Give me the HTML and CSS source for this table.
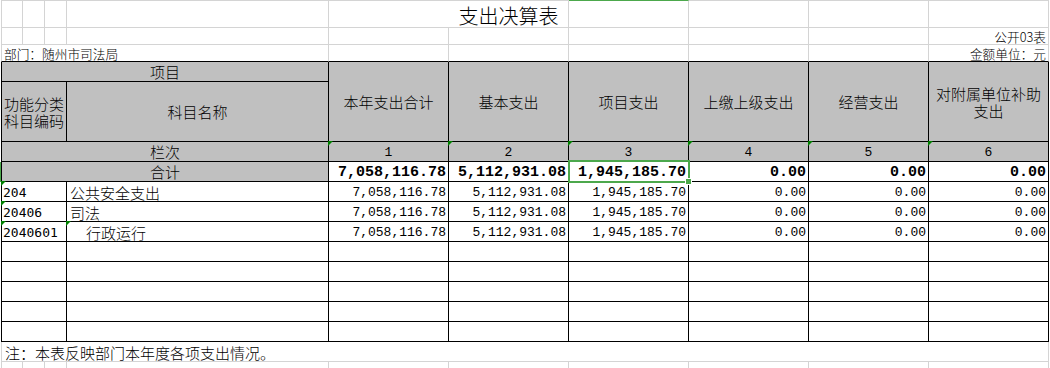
FILE: index.html
```html
<!DOCTYPE html>
<html lang="zh-CN">
<head>
<meta charset="utf-8">
<title>支出决算表</title>
<link rel="stylesheet" href="styles.css">
</head>
<body>
<div class="sheet">
  <!-- row 1: title -->
  <div class="cell top first"></div>
  <div class="cell top"></div>
  <div class="cell top"></div>
  <div class="cell top"></div>
  <div class="cell top s2 title"><span>支出决算表</span></div>
  <div class="cell top colsel"></div>
  <div class="cell top"></div>
  <div class="cell top"></div>
  <div class="cell top"></div>

  <!-- row 2 -->
  <div class="cell first"></div>
  <div class="cell"></div>
  <div class="cell"></div>
  <div class="cell"></div>
  <div class="cell"></div>
  <div class="cell"></div>
  <div class="cell"></div>
  <div class="cell"></div>
  <div class="cell"></div>
  <div class="cell small right">公开03表</div>

  <!-- row 3 -->
  <div class="cell first edge s4 small left">部门：随州市司法局</div>
  <div class="cell edge"></div>
  <div class="cell edge"></div>
  <div class="cell edge"></div>
  <div class="cell edge"></div>
  <div class="cell edge"></div>
  <div class="cell edge small right">金额单位：元</div>

  <!-- header rows -->
  <div class="cell first tb hd s4">项目</div>
  <div class="cell tb hd r2">本年支出合计</div>
  <div class="cell tb hd r2">基本支出</div>
  <div class="cell tb hd r2">项目支出</div>
  <div class="cell tb hd r2">上缴上级支出</div>
  <div class="cell tb hd r2">经营支出</div>
  <div class="cell tb hd r2 wrap"><span>对附属单位补助支出</span></div>
  <div class="cell first tb hd s3 wrap"><span>功能分类科目编码</span></div>
  <div class="cell tb hd">科目名称</div>

  <!-- 栏次 -->
  <div class="cell first tb hd s4">栏次</div>
  <div class="cell tb hd num mark">1</div>
  <div class="cell tb hd num mark">2</div>
  <div class="cell tb hd num mark">3</div>
  <div class="cell tb hd num mark">4</div>
  <div class="cell tb hd num mark">5</div>
  <div class="cell tb hd num mark">6</div>

  <!-- 合计 -->
  <div class="cell first tb hd s4 rowsel">合计</div>
  <div class="cell tb amt bold">7,058,116.78</div>
  <div class="cell tb amt bold">5,112,931.08</div>
  <div class="cell tb amt bold sel">1,945,185.70</div>
  <div class="cell tb amt bold">0.00</div>
  <div class="cell tb amt bold">0.00</div>
  <div class="cell tb amt bold">0.00</div>

  <!-- data rows -->
  <div class="cell first tb s3 code mark">204</div>
  <div class="cell tb name">公共安全支出</div>
  <div class="cell tb amt">7,058,116.78</div>
  <div class="cell tb amt">5,112,931.08</div>
  <div class="cell tb amt">1,945,185.70</div>
  <div class="cell tb amt">0.00</div>
  <div class="cell tb amt">0.00</div>
  <div class="cell tb amt">0.00</div>

  <div class="cell first tb s3 code mark">20406</div>
  <div class="cell tb name">司法</div>
  <div class="cell tb amt">7,058,116.78</div>
  <div class="cell tb amt">5,112,931.08</div>
  <div class="cell tb amt">1,945,185.70</div>
  <div class="cell tb amt">0.00</div>
  <div class="cell tb amt">0.00</div>
  <div class="cell tb amt">0.00</div>

  <div class="cell first tb s3 code mark">2040601</div>
  <div class="cell tb name indent mark">行政运行</div>
  <div class="cell tb amt">7,058,116.78</div>
  <div class="cell tb amt">5,112,931.08</div>
  <div class="cell tb amt">1,945,185.70</div>
  <div class="cell tb amt">0.00</div>
  <div class="cell tb amt">0.00</div>
  <div class="cell tb amt">0.00</div>

  <!-- empty rows -->
  <div class="cell first tb s3"></div><div class="cell tb"></div>
  <div class="cell tb"></div><div class="cell tb"></div><div class="cell tb"></div><div class="cell tb"></div><div class="cell tb"></div><div class="cell tb"></div>
  <div class="cell first tb s3"></div><div class="cell tb"></div>
  <div class="cell tb"></div><div class="cell tb"></div><div class="cell tb"></div><div class="cell tb"></div><div class="cell tb"></div><div class="cell tb"></div>
  <div class="cell first tb s3"></div><div class="cell tb"></div>
  <div class="cell tb"></div><div class="cell tb"></div><div class="cell tb"></div><div class="cell tb"></div><div class="cell tb"></div><div class="cell tb"></div>
  <div class="cell first tb s3"></div><div class="cell tb"></div>
  <div class="cell tb"></div><div class="cell tb"></div><div class="cell tb"></div><div class="cell tb"></div><div class="cell tb"></div><div class="cell tb"></div>
  <div class="cell first tb s3"></div><div class="cell tb"></div>
  <div class="cell tb"></div><div class="cell tb"></div><div class="cell tb"></div><div class="cell tb"></div><div class="cell tb"></div><div class="cell tb"></div>

  <!-- note -->
  <div class="cell first s10 note">注：本表反映部门本年度各项支出情况。</div>

  <!-- trailing row -->
  <div class="cell first"></div>
  <div class="cell"></div>
  <div class="cell"></div>
  <div class="cell"></div>
  <div class="cell"></div>
  <div class="cell"></div>
  <div class="cell"></div>
  <div class="cell"></div>
  <div class="cell"></div>
  <div class="cell"></div>
</div>
</body>
</html>
```

FILE: styles.css
```css
html, body {
  margin: 0;
  padding: 0;
  overflow: hidden;
  background: #fff;
}

body {
  font-family: "Noto Sans CJK SC", "Noto Sans", sans-serif;
  font-weight: 300;
  color: #000;
}

.sheet {
  margin-left: 1px;
  display: grid;
  grid-template-columns: 22px 22px 22px 262px repeat(6, 120px);
  grid-template-rows: 28px 17px 17px 20px 60px 20px 20px repeat(8, 20px) 20px 20px;
  font-size: 15px;
  line-height: 15px;
}

.cell {
  box-sizing: border-box;
  position: relative;
  display: flex;
  align-items: center;
  min-width: 0;
  white-space: nowrap;
  border-right: 1px solid #d4d4d4;
  border-bottom: 1px solid #d4d4d4;
}

.top { border-top: 1px solid #d4d4d4; }
.first { border-left: 1px solid #d4d4d4; }
.edge { border-bottom-color: #000; }
.tb { border-color: #000; }

.s2 { grid-column: span 2; }
.s3 { grid-column: span 3; }
.s4 { grid-column: span 4; }
.s10 { grid-column: span 10; }
.r2 { grid-row: span 2; }

.hd {
  background: #c0c0c0;
  justify-content: center;
  text-align: center;
}

.wrap { white-space: normal; }
.wrap span { display: block; line-height: 17px; }

.title {
  justify-content: center;
  padding-left: 120px;
  padding-top: 3px;
  font-size: 20px;
  line-height: 20px;
}

.small {
  font-size: 12.7px;
  line-height: 13px;
  align-items: flex-end;
  padding-bottom: 1px;
}
.left { padding-left: 2px; }
.right { justify-content: flex-end; padding-right: 2px; }

.num {
  font-family: "Liberation Mono", "DejaVu Sans Mono", monospace;
  font-weight: normal;
  font-size: 13px;
  padding-top: 2px;
}

.amt {
  justify-content: flex-end;
  padding-right: 2px;
  padding-top: 1px;
  font-family: "Liberation Mono", "DejaVu Sans Mono", monospace;
  font-weight: normal;
  font-size: 13px;
}
.bold {
  font-weight: bold;
  font-size: 15px;
}

.code {
  padding-left: 1px;
  padding-top: 1px;
  font-family: "DejaVu Sans Mono", "Liberation Mono", monospace;
  font-weight: normal;
  font-size: 13px;
}

.name {
  padding-left: 3px;
  padding-top: 1px;
}
.indent { padding-left: 19px; }

.note {
  padding-left: 3px;
  padding-top: 1px;
}

/* green "number stored as text" markers */
.mark::before {
  content: "";
  position: absolute;
  top: -1px;
  left: -1px;
  width: 0;
  height: 0;
  border-top: 5px solid #008000;
  border-right: 5px solid transparent;
}

/* selection highlight */
.colsel { border-top-color: #4ca84c; }
.rowsel { box-shadow: -1px 0 0 #4ca84c; }

.sel::before {
  content: "";
  position: absolute;
  z-index: 2;
  left: -1px;
  top: -2px;
  width: 122px;
  height: 23px;
  box-sizing: border-box;
  border: 2px solid #4ca84c;
}
.sel::after {
  content: "";
  position: absolute;
  z-index: 3;
  left: 116px;
  top: 16px;
  width: 5px;
  height: 5px;
  background: #4ca84c;
  border: 1px solid #fff;
}
```
